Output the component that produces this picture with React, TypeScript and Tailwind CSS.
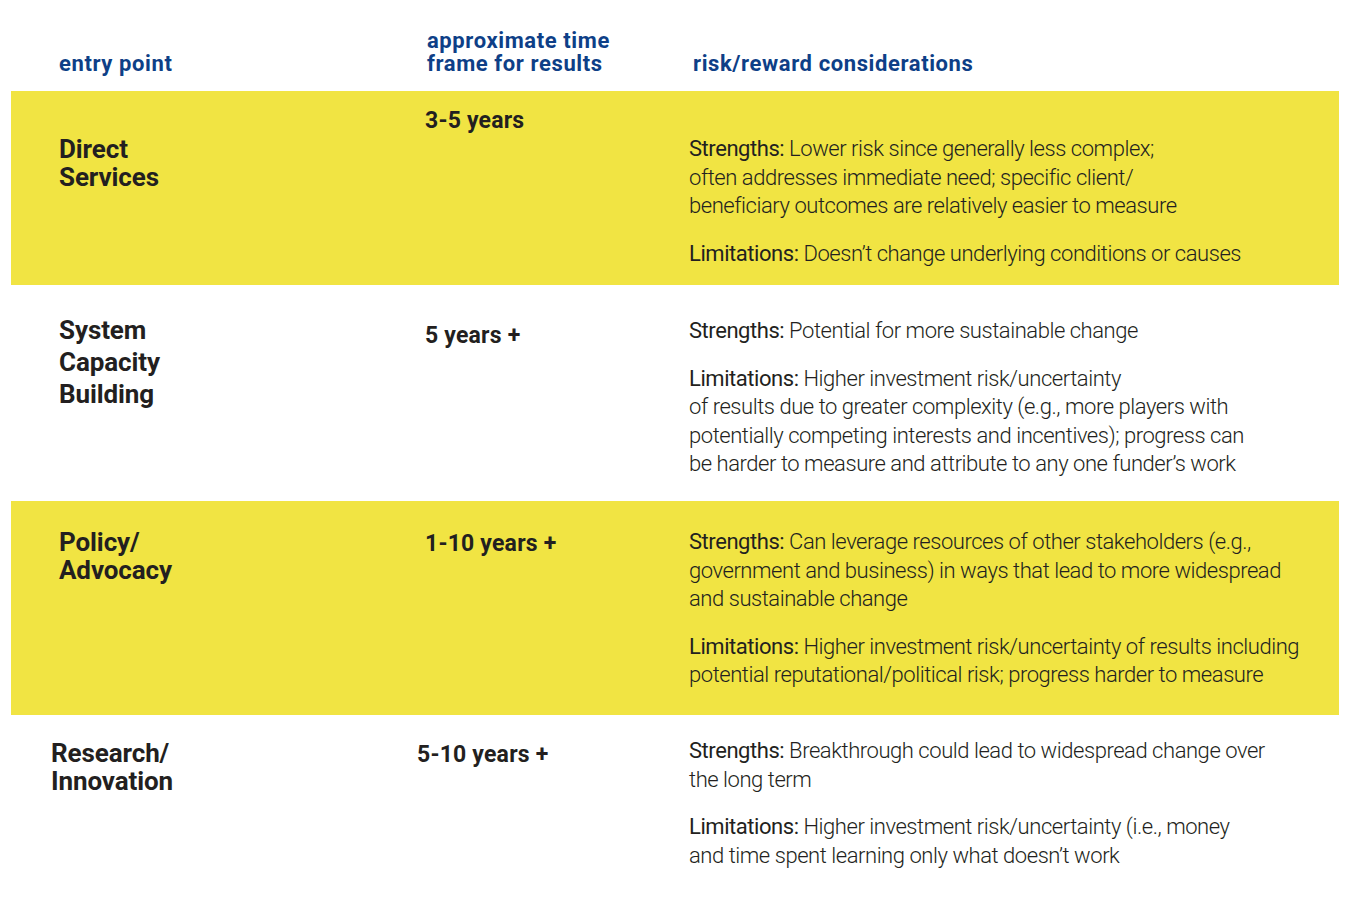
const rows = [
  {
    name: ["Direct", "Services"],
    time: "3-5 years",
    strengths: ["Lower risk since generally less complex;", "often addresses immediate need; specific client/", "beneficiary outcomes are relatively easier to measure"],
    limitations: ["Doesn\u2019t change underlying conditions or causes"],
    yellow: true,
    h: "h-[194px]",
    nameTop: "pt-[44px]",
    timeTop: "pt-[16px]",
    textTop: "pt-[44px]",
    nameLh: "leading-[28px]",
    shift: "",
  },
  {
    name: ["System", "Capacity", "Building"],
    time: "5 years +",
    strengths: ["Potential for more sustainable change"],
    limitations: ["Higher investment risk/uncertainty", "of results due to greater complexity (e.g., more players with", "potentially competing interests and incentives); progress can", "be harder to measure and attribute to any one funder\u2019s work"],
    yellow: false,
    h: "h-[216px]",
    nameTop: "pt-[29px]",
    timeTop: "pt-[37px]",
    textTop: "pt-[32px]",
    nameLh: "leading-[32px]",
    shift: "",
  },
  {
    name: ["Policy/", "Advocacy"],
    time: "1-10 years +",
    strengths: ["Can leverage resources of other stakeholders (e.g.,", "government and business) in ways that lead to more widespread", "and sustainable change"],
    limitations: ["Higher investment risk/uncertainty of results including", "potential reputational/political risk; progress harder to measure"],
    yellow: true,
    h: "h-[214px]",
    nameTop: "pt-[27px]",
    timeTop: "pt-[29px]",
    textTop: "pt-[27px]",
    nameLh: "leading-[28px]",
    shift: "",
  },
  {
    name: ["Research/", "Innovation"],
    time: "5-10 years +",
    strengths: ["Breakthrough could lead to widespread change over", "the long term"],
    limitations: ["Higher investment risk/uncertainty (i.e., money", "and time spent learning only what doesn\u2019t work"],
    yellow: false,
    h: "h-[187px]",
    nameTop: "pt-[24px]",
    timeTop: "pt-[26px]",
    textTop: "pt-[22px]",
    nameLh: "leading-[28px]",
    shift: "-ml-[8px]",
  },
];

const Lines = ({ lines }: { lines: string[] }) => (
  <>
    {lines.map((l, i) => (
      <span key={i} className="block">
        {l}
      </span>
    ))}
  </>
);

export default function App() {
  return (
    <div className="w-[1354px] h-[902px] bg-white text-[#231f20] font-['Roboto',_'Liberation_Sans',_sans-serif] overflow-hidden">
      {/* header */}
      <div className="h-[91px] ml-[11px] w-[1328px] grid grid-cols-[414px_264px_1fr] items-end pb-[16px] text-[#0e3f87] font-bold text-[22px] leading-[23px] tracking-[0.6px]">
        <div className="pl-[48px]">entry point</div>
        <div className="pl-[2px]">
          approximate time
          <br />
          frame for results
        </div>
        <div className="pl-[4px]">risk/reward considerations</div>
      </div>

      {rows.map((r, i) => (
        <div
          key={i}
          className={`ml-[11px] w-[1328px] grid grid-cols-[414px_264px_1fr] ${r.h} ${r.yellow ? "bg-[#f1e443]" : "bg-white"}`}
        >
          <div className={`pl-[48px] ${r.nameTop}`}>
            <div className={`${r.shift} font-bold text-[26px] ${r.nameLh} tracking-[-0.1px]`}>
              <Lines lines={r.name} />
            </div>
          </div>
          <div className={r.timeTop}>
            <div className={`${r.shift} font-bold text-[23px] leading-[28px] tracking-[0.2px]`}>{r.time}</div>
          </div>
          <div className={`${r.textTop} font-light text-[22px] leading-[28.5px] tracking-[-0.45px]`}>
            <p>
              <span className="font-normal">Strengths:</span> {r.strengths[0]}
              <Lines lines={r.strengths.slice(1)} />
            </p>
            <p className="mt-[19px]">
              <span className="font-normal">Limitations:</span> {r.limitations[0]}
              <Lines lines={r.limitations.slice(1)} />
            </p>
          </div>
        </div>
      ))}
    </div>
  );
}
